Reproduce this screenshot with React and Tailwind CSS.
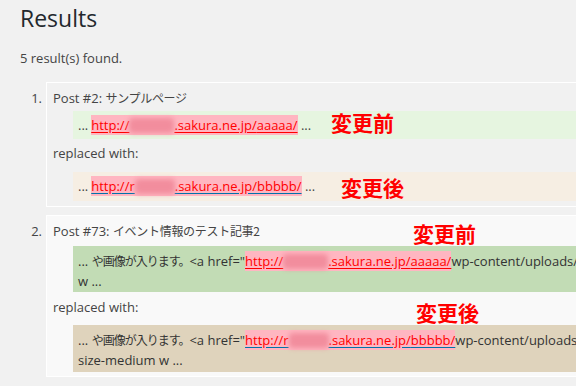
import React from 'react';

const jp = "font-['Noto_Sans_CJK_JP'] text-[12px] tracking-[-0.3px]";
const jpTight = "font-['Noto_Sans_CJK_JP'] text-[12px] tracking-[-1px]";

// blurred host name part of the url
function Blur({ w = 45 }) {
	return (
		<span
			className="inline-block h-[15px] align-[-3px] bg-[#f28d9d] blur-[2.5px] rounded-sm"
			style={{ width: w }}
		/>
	);
}

function Link({ prefix = 'http://', blur = 45, path, line = 'decoration-[#ff0000]' }) {
	return (
		<span className={`inline-block leading-[20px] bg-[#ffb6c1] text-[#ff0000] underline ${line} underline-offset-2`}>
			{prefix}
			<Blur w={blur} />
			.sakura.ne.jp/{path}
		</span>
	);
}

function Note({ children, className }) {
	return (
		<span className={`absolute text-[21px] leading-[21px] font-bold text-[#ff0000] font-['Noto_Sans_CJK_JP'] ${className}`}>
			{children}
		</span>
	);
}

export default function App() {
	return (
		<div className="relative w-[576px] h-[386px] overflow-hidden bg-[#f1f1f1] text-[#444] text-[13px] font-['Open_Sans','Noto_Sans_CJK_JP',sans-serif]">
			<div className="pl-5">
				<h1 className="pt-[4px] text-[23px] leading-[29px] text-[#23282d]">Results</h1>
				<p className="mt-[15px] leading-[20px]">5 result(s) found.</p>

				<ol className="mt-[14px]">
					{/* item 1 */}
					<li className="flex items-start">
						<span className="w-[26px] shrink-0 pt-[6px] pr-[4px] text-right leading-[20px]">1.</span>
						<div className="flex-1 min-w-0 border border-white border-r-0 bg-[#f1f1f1] pl-[6px] pt-[5px] pb-[5px]">
							<div className="leading-[20px]">
								Post #2: <span className={jp}>サンプルページ</span>
							</div>
							<div className="mt-[3px] ml-[20px] h-[28px] px-[5px] leading-[28px] whitespace-nowrap overflow-hidden bg-[#e6f5e0]">
								...<span className="ml-[3px]" /><Link path="aaaaa/" /> ...
							</div>
							<div className="mt-[4px] leading-[20px]">replaced with:</div>
							<div className="mt-[9px] ml-[20px] h-[29px] px-[5px] leading-[29px] whitespace-nowrap overflow-hidden bg-[#f6eee3]">
								...<span className="ml-[3px]" /><Link prefix="http://r" blur={40} path="bbbbb/" line="decoration-[#0073aa]" /> ...
							</div>
						</div>
					</li>

					{/* item 2 */}
					<li className="flex items-start mt-[8px]">
						<span className="w-[26px] shrink-0 pt-[6px] pr-[4px] text-right leading-[20px]">2.</span>
						<div className="flex-1 min-w-0 border border-white border-r-0 bg-[#f9f9f9] pl-[6px] pt-[5px] pb-[4px]">
							<div className="leading-[20px]">
								Post #73: <span className={jp}>イベント情報のテスト記事2</span>
							</div>
							<div className="mt-[5px] ml-[20px] h-[46px] px-[5px] pt-[5px] leading-[20px] whitespace-nowrap overflow-hidden bg-[#c2dcb5] text-[#333]">
								<div>
									... <span className={jpTight}>や画像が入ります。</span>&lt;a href="<Link path="aaaaa/" />wp-content/uploads/2014/08/
								</div>
								<div>w ...</div>
							</div>
							<div className="mt-[5px] leading-[20px]">replaced with:</div>
							<div className="mt-[8px] ml-[20px] h-[47px] px-[5px] pt-[5px] leading-[20px] whitespace-nowrap overflow-hidden bg-[#dfd3bc] text-[#333]">
								<div>
									... <span className={jpTight}>や画像が入ります。</span>&lt;a href="<Link prefix="http://r" blur={40} path="bbbbb/" line="decoration-[#0073aa]" />wp-content/uploads/2014/08/
								</div>
								<div>size-medium w ...</div>
							</div>
						</div>
					</li>
				</ol>
			</div>

			{/* annotations drawn over the screenshot */}
			<Note className="left-[331px] top-[112px]">変更前</Note>
			<Note className="left-[341px] top-[177px]">変更後</Note>
			<Note className="left-[413px] top-[223px]">変更前</Note>
			<Note className="left-[416px] top-[302px]">変更後</Note>
		</div>
	);
}
